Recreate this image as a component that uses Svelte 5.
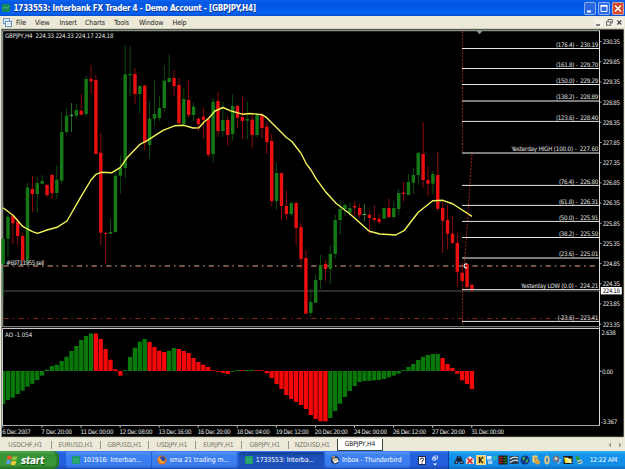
<script lang="ts">
  type Candle = [high: number, top: number, bottom: number, low: number, up: number];

  const STEP = 4.884;
  const LEFT = 3.1;
  const ZERO = 371;

  const menus = ['File', 'View', 'Insert', 'Charts', 'Tools', 'Window', 'Help'];

  const tabs = [
    { name: 'USDCHF,H1', width: 51.5 },
    { name: 'EURUSD,H1', width: 49 },
    { name: 'GBPUSD,H1', width: 48.5 },
    { name: 'USDJPY,H1', width: 46.5 },
    { name: 'EURJPY,H1', width: 46.5 },
    { name: 'GBPJPY,H1', width: 46.5 },
    { name: 'NZDUSD,H1', width: 48.5 }
  ];

  // vertical positions on the price panel, 1 = bullish, 0 = bearish, 2 = doji
  const candles: Candle[] = [
    [235, 239, 264, 298, 1], [214, 216.7, 238.7, 257, 1], [215, 215.7, 223.3, 244, 0], [218, 221.7, 236, 245, 0],
    [233, 236, 260, 263, 0], [182.7, 187.7, 260, 264, 1], [176, 189, 194, 212, 0], [176.7, 183, 194, 213, 1],
    [175, 181, 183.7, 184, 1], [184, 185, 195, 197, 0], [174, 175, 193, 199, 0], [165, 179.7, 193, 199, 1],
    [112.7, 132, 180.7, 184, 1], [108, 115.7, 132, 135, 1], [103, 114.8, 116, 132, 2], [104, 110, 115.7, 118, 1],
    [94, 110.7, 114.7, 115.5, 0], [76, 79, 114, 117, 1], [65, 79, 81.3, 94, 0], [74.6, 80, 154, 154, 0],
    [133, 152.7, 232.7, 245, 0], [232, 233, 234, 264, 0], [218.7, 232, 233.7, 234, 1], [171.7, 175.7, 232, 233, 1],
    [155.7, 168, 175.7, 194, 1], [45, 74.3, 168, 178, 1], [46, 74, 75.2, 96, 1], [68, 74, 94, 104, 0],
    [85, 86, 94, 113, 1], [85, 85.7, 142.7, 150, 0], [101, 118.7, 145, 159, 1], [80.7, 114, 118.7, 125.7, 1],
    [96, 108, 118, 120.7, 1], [65.7, 80.7, 108, 112, 1], [54, 78, 82, 83.5, 1], [70, 78, 86, 96.7, 0],
    [78, 85, 123, 126, 0], [88, 99, 124, 126, 1], [80, 100, 115, 117.7, 0], [102, 106.7, 115, 121, 1],
    [117.5, 118.7, 124, 131, 0], [107.7, 116.7, 119.7, 139, 0], [117, 119, 154.7, 157.7, 0], [98, 101.7, 154, 162.7, 1],
    [92, 101, 131, 137, 0], [102, 120, 131, 137, 1], [116, 120, 135, 146, 0], [94, 106, 134, 140.7, 1],
    [105, 106, 117.7, 127.7, 0], [97, 117, 121, 139, 0], [102, 119, 120.7, 139, 1], [114, 119.7, 135, 148.7, 0],
    [113, 115, 135, 138, 1], [113, 115, 128, 138, 0], [122, 126.7, 142, 154, 0], [134, 141, 201, 206, 0],
    [162.7, 173, 201, 210, 1], [173, 173, 206, 220, 0], [190.7, 206, 214, 218.7, 0], [201, 203, 214, 216, 1],
    [201.7, 203, 228, 245, 0], [223, 227, 259, 269, 0], [250, 258, 313.7, 314, 0], [289, 302, 313, 316.7, 1],
    [275, 280, 302.7, 303, 1], [255, 265, 280, 289, 1], [260, 264, 269, 281, 0], [245, 254, 269, 284, 1],
    [215, 220, 254, 258.7, 1], [200, 209, 220, 235, 1], [203, 205, 209, 216, 1], [202, 208, 213, 216, 1],
    [201, 206, 207.5, 216, 0], [204, 208, 215, 218, 0], [204, 214, 215, 221.7, 2], [211, 214.7, 218, 234, 0],
    [205, 218, 220, 221.7, 0], [214, 219, 222, 224, 0], [207, 208, 218.7, 219, 1], [198.7, 208, 217, 218, 0],
    [201.7, 208, 217, 219, 1], [189, 193, 209, 215, 1], [181.7, 192.7, 194, 201, 0], [174, 182, 195, 195, 1],
    [167.7, 175, 182.7, 194, 1], [151.7, 153, 175, 185, 1], [122, 154, 180, 187.7, 0], [166, 180, 183.7, 195.7, 0],
    [171, 174, 183.7, 194, 1], [152, 175, 208.7, 210.7, 0], [202, 208, 220.7, 252.7, 0], [205, 220, 233.7, 249, 0],
    [215.7, 233.7, 243, 244, 0], [233, 243, 271.7, 286.7, 0], [263, 272.7, 281, 283, 0], [263, 264, 287, 289, 0],
    [284, 284.7, 290.7, 291.7, 0]
  ];

  const oscillator = [
    -33, -29, -26.7, -23, -19.7, -15.7, -12.7, -9, -4.7, 1.3, 5, 6.3, 10, 14.3, 20, 25, 31, 35, 37.5,
    37.5, 32, 22, 11.3, 1.7, -4.7, 1, 14, 23.3, 29.3, 32, 29, 24, 20.3, 19, 20.3, 23, 22, 20, 18, 13, 9,
    6.3, 4, 0.7, -0.8, -2, -3, -0.8, 1, 0.8, 1, 1.1, 0.9, 0.7, -2.3, -7, -13, -18, -24, -28, -31, -34,
    -38, -44, -48, -50.3, -50.4, -47, -40, -32.7, -26, -20, -15, -11, -10, -9.9, -9.4, -9, -8, -6.3,
    -4.7, -2.7, 1, 4, 7, 11, 14.3, 16, 17, 17.1, 13, 7, 3, -2.7, -9.3, -13, -18
  ];

  const average =
    '3,207.7 13,215.3 23,226.7 32.5,231.7 37.5,233.3 47,230 57,227.3 67,221 81,196.7 91,180 96,174.3 101,172.3 112,172.7 ' +
    '120.5,167.3 127,157.7 140,144.3 147,140.7 163,130.3 175,125.7 184,125.3 193,128 199,127.7 204,122 209,118 215,111 ' +
    '223,107.5 230,110.7 243,114.3 250,113.5 262,114.7 266.7,117.7 280,131 286.7,137.7 291.7,141.3 301,153.3 306,163.3 ' +
    '311,170 316,178.7 326,192.3 336,203.3 350,214 369.3,231.3 380,234 395.7,235 404,230.7 418.3,212.3 432.7,200.7 ' +
    '443,200.3 453,204 472,216.3';

  const levels = [
    { y: 48.5, label: '(176.4) -  230.19', width: 42.5 },
    { y: 68.5, label: '(161.8) -  229.70', width: 42.5 },
    { y: 84.5, label: '(150.0) -  229.29', width: 42.5 },
    { y: 101, label: '(138.2) -  228.89', width: 42.5, soft: true },
    { y: 121.4, label: '(123.6) -  228.40', width: 42.5 },
    { y: 153, label: 'Yesterday HIGH (100.0) -  227.60', width: 87, soft: true },
    { y: 185.4, label: '(76.4) -  226.80', width: 39.5 },
    { y: 205.4, label: '(61.8) -  226.31', width: 39.5 },
    { y: 221.4, label: '(50.0) -  225.91', width: 39.5 },
    { y: 237.5, label: '(38.2) -  225.50', width: 39.5 },
    { y: 258, label: '(23.6) -  225.01', width: 39.5, soft: true },
    { y: 289.6, label: 'Yesterday LOW (0.0) -  224.21', width: 77.5 },
    { y: 321.4, label: '(-23.6) -  223.41', width: 41 }
  ];

  const prices = Array.from({ length: 15 }, (_, i) => (230.35 - i * 0.5).toFixed(2));

  const dates = [
    '6 Dec 2007', '7 Dec 20:00', '11 Dec 00:00', '12 Dec 08:00', '13 Dec 16:00', '16 Dec 20:00', '18 Dec 04:00',
    '19 Dec 12:00', '20 Dec 20:00', '24 Dec 00:00', '26 Dec 12:00', '27 Dec 20:00', '31 Dec 00:00'
  ];

  const tasks = [
    { icon: 'meta', label: '101916: Interban...' },
    { icon: 'fox', label: 'sma 21 trading m...' },
    { icon: 'meta', label: '1733553: Interba...', active: true },
    { icon: 'mail', label: 'Inbox - Thunderbird' }
  ];

  const x = (i: number) => LEFT + i * STEP;
  const falling = (i: number) => i > 0 && oscillator[i] <= oscillator[i - 1];
</script>

<div class="desktop">
  <header class="titlebar">
    <svg class="app-icon" viewBox="0 0 8 8"><rect width="8" height="8" rx="1" fill="#15875a" /><path d="M1 5L3 2.5L4.5 4.5L7 2" stroke="#5fd08f" stroke-width=".7" fill="none" /></svg>
    <span class="caption">1733553: Interbank FX Trader 4 - Demo Account - [GBPJPY,H4]</span>
    <div class="window-buttons">
      <svg viewBox="0 0 12 13"><rect x=".4" y=".4" width="11.2" height="12.2" rx="1.5" fill="#2c68e2" stroke="#b9cdf5" stroke-width=".8" /><path d="M3 9.5h4" stroke="#fff" stroke-width="2" /></svg>
      <svg viewBox="0 0 12 13"><rect x=".4" y=".4" width="11.2" height="12.2" rx="1.5" fill="#2c68e2" stroke="#b9cdf5" stroke-width=".8" /><path d="M3 4h6v5.5H3z" stroke="#fff" fill="none" /><path d="M2.5 3.7h7" stroke="#fff" stroke-width="1.6" /></svg>
      <svg viewBox="0 0 12 13"><rect x=".4" y=".4" width="11.2" height="12.2" rx="1.5" fill="#d9492a" stroke="#efc4bb" stroke-width=".8" /><path d="M3 3.5l6 6M9 3.5l-6 6" stroke="#fff" stroke-width="1.5" /></svg>
    </div>
  </header>

  <nav class="menubar">
    <svg class="doc-icon" viewBox="0 0 9 9"><rect x=".5" y=".5" width="6" height="5" fill="#dceafa" stroke="#6f9cca" /><rect x="2.5" y="3.5" width="6" height="5" fill="#fff" stroke="#5e8fc4" /><path d="M3.5 7l1.5-1.5l1 1L8 5" stroke="#5e8fc4" stroke-width=".6" fill="none" /></svg>
    <div class="menus">
      {#each menus as menu}
        <span>{menu}</span>
      {/each}
    </div>
    <div class="child-buttons">
      <svg viewBox="0 0 9 9"><path d="M2 7h4" stroke="#444" stroke-width="1.3" /></svg>
      <svg viewBox="0 0 9 9"><path d="M3 3.2V1.5h4.3v3.5H6" stroke="#555" stroke-width=".9" fill="none" /><rect x="1.5" y="3.8" width="4.2" height="3.4" stroke="#555" stroke-width=".9" fill="none" /></svg>
      <svg viewBox="0 0 9 9"><path d="M2.3 2.3l4 4.2M6.3 2.3l-4 4.2" stroke="#444" stroke-width="1.2" /></svg>
    </div>
  </nav>

  <svg class="chart" viewBox="0 28 625 410" width="625" height="410">
    <rect x="0" y="28" width="625" height="410" fill="#ece9d8" />
    <rect x="1" y="28.7" width="623" height="408.5" fill="#8d9186" />
    <rect x="2" y="29.6" width="621.5" height="407" fill="#000" />
    <path d="M2.7 326V30.7H599.5" fill="none" stroke="#a9b3a5" />
    <path d="M599.5 30.5V425.5" stroke="#dcdcdc" />

    <!-- horizontal price lines -->
    <path d="M3 291H599.5" stroke="#55575a" stroke-width="1.2" />
    <path d="M3.6 265.5H596" stroke="#5f6b50" stroke-dasharray="5.3 3.8 1.6 3.95" />
    <path d="M3.6 266.5H596" stroke="#8a4036" stroke-dasharray="5.3 3.8 1.6 3.95" />
    <path d="M3.6 318.5H599" stroke="#93251f" stroke-width=".9" stroke-dasharray="5.3 3.8 1.6 3.95" />

    {#each candles as [high, top, bottom, low, up], i}
      <g class="candle" class:up={up === 1} class:doji={up === 2}>
        <rect class="wick" x={x(i) - 0.4} y={high} width=".8" height={low - high} />
        <rect x={x(i) - 1.7} y={top} width="3.4" height={bottom - top} />
      </g>
    {/each}

    <polyline points={average} fill="none" stroke="#f4f45a" stroke-width="1.4" stroke-linejoin="round" />

    <!-- fibonacci grid -->
    <path d="M462.4 31V153M462.4 284V327M472 154L465.6 248L464.5 263" fill="none" stroke="#b4261c" stroke-width=".9" stroke-dasharray="2 1.5" />
    {#each levels as level}
      <path d="M462 {level.y}H599" stroke={level.soft ? '#a5a5a5' : '#e6e6e6'} stroke-width={level.soft ? 1.4 : 1} />
      <text class="label" x={598.4 - level.width} y={level.y - 1.6} textLength={level.width}>{level.label}</text>
    {/each}
    <path d="M467.2 264.2A2 2 0 1 0 467 267.6" fill="none" stroke="#fff" stroke-width="1.1" />
    <path d="M476.5 31H482.5L479.5 34.3Z" fill="#8592a0" />

    <text class="label" x="5" y="38" textLength="108.5">GBPJPY,H4  224.33 224.33 224.17 224.18</text>
    <text class="label" x="6" y="264.6" textLength="38">#69711955 sell</text>

    {#each prices as price, i}
      <path d="M600 {41.6 + i * 20.18}h1.5" stroke="#ccc" stroke-width=".8" />
      <text class="label" x="602.7" y={44 + i * 20.18} textLength="17.3">{price}</text>
    {/each}
    <rect x="600.8" y="287" width="21" height="7.4" fill="#fff" />
    <text class="label current" x="602.7" y="293.2" textLength="17.3">224.18</text>

    <!-- awesome oscillator -->
    <path d="M2 326.6H600" stroke="#777" stroke-width="1.4" />
    <path d="M2.5 425.5V328.5H600" fill="none" stroke="#c9c9c9" />
    <text class="label" x="5" y="337" textLength="27.3">AO -1.054</text>
    {#each oscillator as value, i}
      <rect
        x={Math.max(x(i) - 2.2, 3)}
        y={value > 0 ? ZERO - value : ZERO}
        width={i === 0 ? 2.2 : 4.3}
        height={Math.abs(value)}
        fill={falling(i) ? '#f60808' : '#087808'}
      />
    {/each}
    <text class="label" x="601.5" y="335" textLength="14.3">2.638</text>
    <path d="M600 371.2h1.5" stroke="#ccc" />
    <text class="label" x="602" y="373.6" textLength="11">0.00</text>
    <text class="label" x="601" y="424.3" textLength="16.3">-3.367</text>

    <!-- time axis -->
    <path d="M2 425.5H600" stroke="#a8a8a8" />
    {#each dates as date, i}
      <path d="M{2.9 + i * 39.07} 426v1.8" stroke="#ccc" stroke-width=".9" />
      <text class="label" x={2.3 + i * 39.07} y="434.3" textLength={i === 0 ? 28.5 : i === 1 ? 30.7 : 33}>{date}</text>
    {/each}
  </svg>

  <div class="tabs">
    {#each tabs as tab}
      <span class="tab" style="width: {tab.width}px">{tab.name}</span>
    {/each}
    <span class="tab active">GBPJPY,H4</span>
    <svg class="scrollers" viewBox="0 0 16 8"><path d="M4 1.5v5L1.5 4zM12 1.5v5L14.5 4z" fill="#9a978a" /></svg>
  </div>

  <footer class="taskbar">
    <div class="start">
      <svg viewBox="0 0 12 12">
        <path d="M1.5 2Q3.5.8 5.8 2L5 5.7Q3 4.8.8 5.8Z" fill="#f0592b" />
        <path d="M6.6 2.3Q9 3.3 11.4 2L10.5 5.8Q8 7 5.8 6Z" fill="#8cc63e" />
        <path d="M.6 6.6Q2.8 5.6 4.9 6.5L4 10.2Q2 9.3 0 10.3Z" fill="#5b9bf0" />
        <path d="M5.6 6.9Q8 7.9 10.3 6.7L9.4 10.5Q7 11.7 4.8 10.6Z" fill="#f9cc36" />
      </svg>
      <span>start</span>
    </div>
    <div class="tasks">
      {#each tasks as task}
        <div class="task" class:active={task.active}>
          <svg viewBox="0 0 10 10">
            {#if task.icon === 'meta'}
              <rect x="1" y="1" width="8" height="8" rx="1" fill="#1c9a68" /><path d="M2 6L4 3.5L5.5 5.5L8 3M3 8V6.5M5 8V7M7 8V6" stroke="#5cd49a" stroke-width=".6" fill="none" />
            {:else if task.icon === 'fox'}
              <circle cx="5" cy="5" r="4.6" fill="#e8711c" /><circle cx="5.6" cy="4" r="2.7" fill="#2c4ea8" /><path d="M.8 2L3.5 3.4L5 6L8 6.5Q6 9 3 7.5Z" fill="#f6a735" />
            {:else}
              <circle cx="5" cy="5" r="4.4" fill="#23407c" /><path d="M2 4L7 3L9 6.5L4.5 8.6Z" fill="#f2ead2" /><path d="M1.5 1.8L5 1L4 4Z" fill="#d8a653" /><path d="M2 4L6 5.6L7 3" stroke="#8b8068" stroke-width=".6" fill="none" />
            {/if}
          </svg>
          <span>{task.label}</span>
        </div>
      {/each}
    </div>
    <div class="language">
      <svg viewBox="0 0 8 9"><rect x=".5" y=".5" width="7" height="8" fill="#fff" stroke="#1b2b55" /><path d="M2.5 3.5Q2.5 2 4 2T5.5 3.5Q5.5 4.3 4 5V5.8M4 6.6V7.6" stroke="#111" fill="none" /></svg>
      <svg viewBox="0 0 8 11"><path d="M3 1h3.5v3H3zM1.5 2.5h3v2.7h-3z" stroke="#dbe7ff" stroke-width=".8" fill="none" /><path d="M2 8.5h4L4 10.5z" fill="#fff" /></svg>
    </div>
    <div class="tray">
      <div class="tray-icons">
        <svg viewBox="0 0 10 10"><path d="M3 1h1.5v2h1V1H7l1 4l1.5 1v3H6V7H4v2H.5V6L2 5z" fill="#16233c" /><circle cx="2.5" cy="7.3" r="1" fill="#7f93ad" /><circle cx="7.5" cy="7.3" r="1" fill="#7f93ad" /></svg>
        <svg viewBox="0 0 10 10"><path d="M1 4L5 1L9 4V9H1z" fill="#e9e1d6" /><path d="M2.5 3.5L7.5 8.5M7.5 3.5L2.5 8.5" stroke="#dc1f1f" stroke-width="1.7" /></svg>
        <svg viewBox="0 0 10 10"><rect x=".5" y=".5" width="9" height="9" fill="#f4cd52" stroke="#eadca0" /><path d="M3.5 2v6M7 2L4 5L7 8" stroke="#222" stroke-width="1.3" fill="none" /></svg>
        <svg viewBox="0 0 10 10"><rect x="0" y="1" width="4.5" height="3.5" fill="#d9ecff" /><rect x="1" y="5.5" width="4.5" height="3.5" fill="#9ec9f3" /><path d="M7 1v4M9 0v5" stroke="#39d08d" stroke-width="1.1" /></svg>
        <svg viewBox="0 0 10 10"><rect x=".5" y=".5" width="9" height="9" fill="#161616" /><path d="M1 2.5h3.6M1 5h3.6M1 7.5h3.6" stroke="#ba1a1a" stroke-width="1.5" /><path d="M5.4 2.5H9M5.4 5H9M5.4 7.5H9" stroke="#167316" stroke-width="1.5" /></svg>
        <svg viewBox="0 0 10 10"><rect x=".5" y="1" width="9" height="8" fill="#273c50" /><path d="M1 4Q5 1 9 3M1 7.5Q6 3.5 9 6" stroke="#dfe6ea" stroke-width="1.3" fill="none" /></svg>
        <svg viewBox="0 0 10 10"><circle cx="5" cy="5" r="4.5" fill="#142f88" /><path d="M2 2.5L5 1.5L5 4L3 6zM6 5L8.5 3.5L7.5 7.5L5.5 8z" fill="#35ab4e" /></svg>
        <svg viewBox="0 0 10 10"><rect x="1.5" y=".5" width="5" height="7" rx="1" fill="#f3d375" /><circle cx="6.5" cy="7" r="2.5" fill="#d8a13a" /><path d="M3 3h3M3 5h2" stroke="#8d6a22" /></svg>
        <svg viewBox="0 0 10 10"><ellipse cx="5" cy="5" rx="2.7" ry="4.5" fill="#e5cc86" /><ellipse cx="5" cy="5" rx="1" ry="2.8" fill="#4e7ca9" /></svg>
        <svg viewBox="0 0 10 10"><circle cx="4.2" cy="4" r="3.4" fill="#6c7582" /><circle cx="4" cy="3.7" r="1.4" fill="#d9dee5" /><path d="M8 4Q9.3 7 5.5 9" stroke="#e3e9f2" fill="none" /></svg>
        <svg viewBox="0 0 10 10"><rect x=".5" y="1" width="9" height="8" fill="#151512" /><path d="M1 2.5h3l1 1h3.5V8H2z" fill="#f3e53a" /><path d="M4 3L8.5 8" stroke="#fff" stroke-width="1.2" /></svg>
        <svg viewBox="0 0 10 10"><path d="M1.5 1.5L5 .8L6 5L2.5 6z" fill="#2c9c48" /><path d="M3 5.5L7.5 4.5L9 8L4.5 9.5z" fill="#bccbd6" /><path d="M4 7.5L7.5 6.5" stroke="#22793a" stroke-width="1.2" /></svg>
      </div>
      <span class="clock">12:22 AM</span>
    </div>
  </footer>
</div>

<style>
  :global(body) {
    overflow: hidden;
  }

  .desktop {
    display: flex;
    flex-direction: column;
    width: 625px;
    height: 469px;
    background: #ece9d8;
    font-family: 'DejaVu Sans Condensed', 'DejaVu Sans', sans-serif;
    font-size: 6.6px;
    white-space: nowrap;
  }

  .desktop svg {
    display: block;
    flex: none;
  }

  .titlebar {
    display: flex;
    align-items: center;
    box-sizing: border-box;
    height: 16px;
    padding: 0 1px 0 2px;
    background: linear-gradient(#0a62ee, #0255e0 25%, #0562f5 80%, #0450cf);
  }

  .app-icon {
    width: 8px;
    height: 8px;
  }

  .caption {
    flex: 1;
    margin-left: 3.5px;
    color: #fff;
    font-size: 8.1px;
    font-weight: bold;
    letter-spacing: -0.22px;
    text-shadow: 0.6px 0.6px 0 #0a2f86;
  }

  .window-buttons {
    display: flex;
    gap: 2.2px;
  }

  .window-buttons svg {
    width: 12px;
    height: 13px;
  }

  .menubar {
    display: flex;
    align-items: center;
    height: 12px;
    padding: 0 1px 0 3px;
    background: #ece9d8;
    color: #222;
  }

  .doc-icon {
    width: 9px;
    height: 9px;
  }

  .menus {
    display: grid;
    flex: 1;
    grid-template-columns: 19px 24.5px 25.5px 29px 25px 33.5px 20px;
    margin-left: 4px;
    font-size: 7.1px;
    letter-spacing: -0.15px;
  }

  .child-buttons {
    display: flex;
    gap: 1.5px;
  }

  .child-buttons svg {
    width: 9px;
    height: 9px;
    background: #f4f2e8;
  }

  .candle {
    fill: #ea1010;
  }

  .candle.up {
    fill: #157a15;
  }

  .candle.doji {
    fill: #4fae4a;
  }

  .wick {
    opacity: 0.75;
  }

  .label {
    fill: #e4e4e4;
    font-size: 6.2px;
    white-space: pre;
  }

  .label.current {
    fill: #111;
  }

  .tabs {
    display: flex;
    align-items: center;
    height: 13px;
    background: #ece9d8;
    color: #77746a;
    font-size: 6.7px;
  }

  .tab {
    box-sizing: border-box;
    border-right: 1px solid #99968a;
    line-height: 8px;
    text-align: center;
    letter-spacing: -0.15px;
  }

  .tab:nth-child(7) {
    border-right-color: transparent;
  }

  .tab.active {
    width: 46px;
    height: 12px;
    border: 1px solid #444;
    border-top: 0;
    background: #fff;
    color: #111;
    line-height: 11px;
  }

  .scrollers {
    width: 16px;
    height: 8px;
    margin: 0 2px 0 auto;
  }

  .taskbar {
    display: flex;
    flex: 1;
    background: linear-gradient(#3a80f2, #2460dc 15%, #245edb 80%, #1b48ae);
    color: #fff;
    font-size: 6.9px;
    letter-spacing: -0.08px;
  }

  .start {
    display: flex;
    align-items: center;
    gap: 3px;
    box-sizing: border-box;
    width: 59px;
    padding-left: 6px;
    border-radius: 0 6px 6px 0;
    background: linear-gradient(#5cb45c, #359235 20%, #389a38 75%, #256f25);
    box-shadow: inset -2px 0 2px #256f25;
    font-size: 10px;
    font-style: italic;
    font-weight: bold;
    letter-spacing: -0.3px;
    text-shadow: 0.7px 0.7px 1px #163f16;
  }

  .start svg {
    width: 12px;
    height: 12px;
  }

  .tasks {
    display: flex;
    gap: 1.3px;
    padding: 1px 0 1px 7px;
  }

  .task {
    display: flex;
    align-items: center;
    gap: 2.2px;
    box-sizing: border-box;
    width: 85px;
    padding-left: 5px;
    border-radius: 2px;
    background: linear-gradient(#5a97fa, #3c80f2 20%, #3a7bee 80%, #2d68d6);
  }

  .task.active {
    background: linear-gradient(#143f97, #1c4eb6 25%, #1f52bd);
  }

  .task svg {
    width: 10px;
    height: 10px;
  }

  .language {
    display: flex;
    flex: 1;
    align-items: center;
    justify-content: center;
    gap: 5px;
  }

  .language svg:first-child {
    width: 8px;
    height: 9px;
  }

  .language svg:last-child {
    width: 8px;
    height: 11px;
  }

  .tray {
    display: flex;
    align-items: center;
    justify-content: space-between;
    box-sizing: border-box;
    width: 177.5px;
    padding: 0 8px 0 5.5px;
    border-left: 1px solid #0c3f9d;
    background: linear-gradient(#35b3f7, #1394ec 20%, #118be6 80%, #0d6cc0);
  }

  .tray-icons {
    display: flex;
    gap: 0.95px;
  }

  .tray-icons svg {
    width: 10px;
    height: 10px;
  }

  .clock {
    font-size: 6.7px;
    letter-spacing: -0.15px;
  }
</style>
